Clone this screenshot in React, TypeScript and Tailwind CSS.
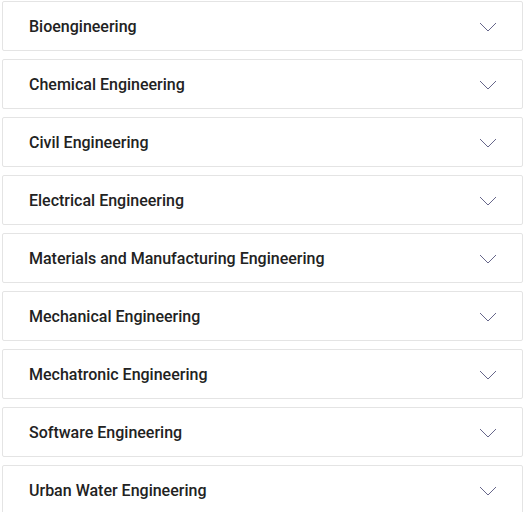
import { useState } from "react";

const programs = [
  "Bioengineering",
  "Chemical Engineering",
  "Civil Engineering",
  "Electrical Engineering",
  "Materials and Manufacturing Engineering",
  "Mechanical Engineering",
  "Mechatronic Engineering",
  "Software Engineering",
  "Urban Water Engineering",
];

function Chevron({ open }: { open: boolean }) {
  return (
    <svg
      width="18"
      height="10"
      viewBox="0 0 18 10"
      fill="none"
      className={open ? "rotate-180 transition" : "transition"}
    >
      <path d="M1 1l8 8 8-8" stroke="#66668a" strokeWidth="1" />
    </svg>
  );
}

export default function App() {
  const [open, setOpen] = useState<number | null>(null);

  return (
    <div
      className="min-h-screen bg-white px-[2px] pt-[1px] flex flex-col gap-2"
      style={{ fontFamily: "Roboto, 'Liberation Sans', sans-serif" }}
    >
      {programs.map((name, i) => (
        <div key={name} className="border border-[#e4e4e4] rounded-[2px] bg-white">
          <button
            onClick={() => setOpen(open === i ? null : i)}
            className="w-full h-[48px] pt-[2px] flex items-center justify-between pl-[26px] pr-[25px] text-left"
          >
            <span className="text-[16px] font-medium text-[#222]">{name}</span>
            <Chevron open={open === i} />
          </button>
        </div>
      ))}
    </div>
  );
}
